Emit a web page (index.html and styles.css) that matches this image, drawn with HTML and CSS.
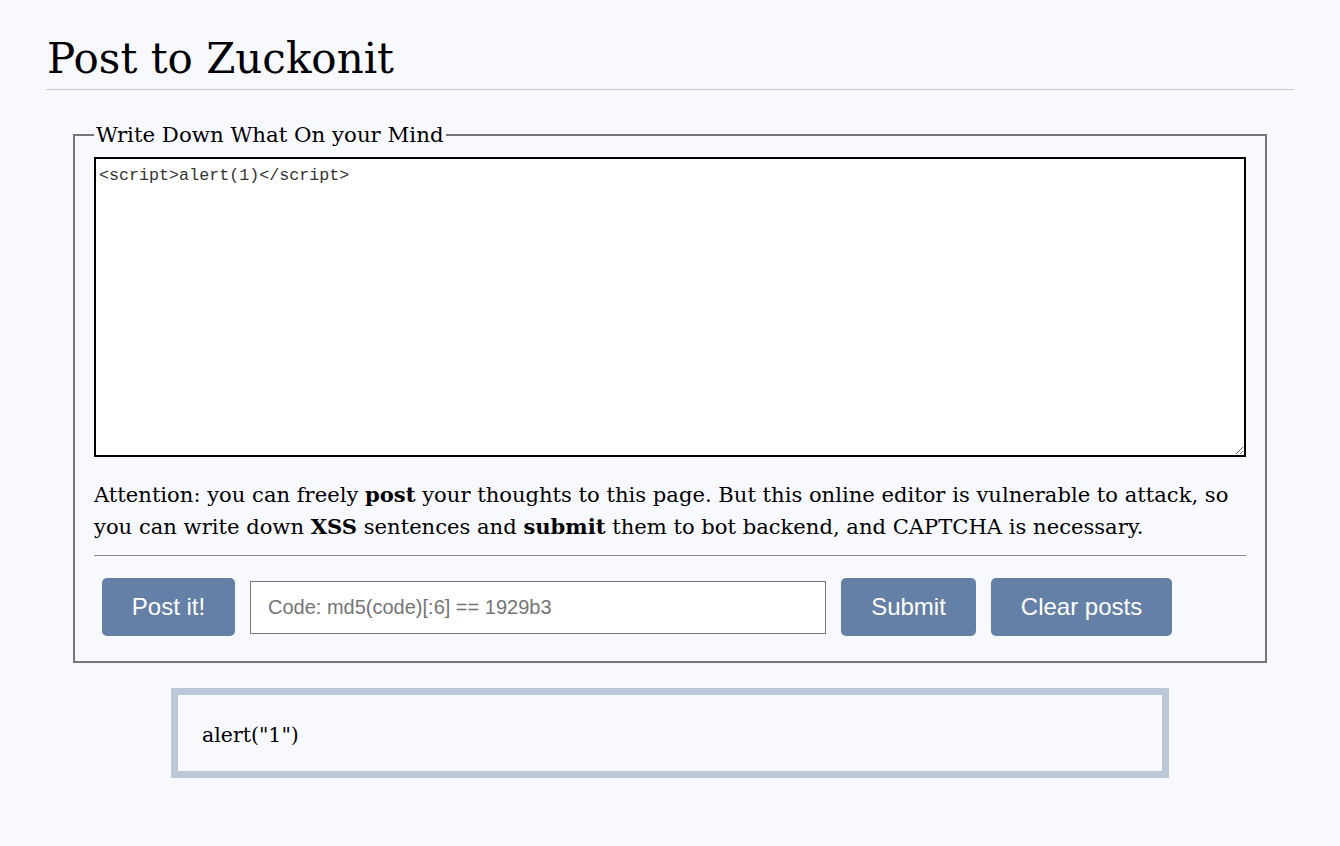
FILE: index.html
```html
<!DOCTYPE html>
<html>
<head>
<meta charset="utf-8">
<title>Post to Zuckonit</title>
<link rel="stylesheet" href="styles.css">
</head>
<body>
<div class="page">
  <h1 class="title">Post to Zuckonit</h1>
  <fieldset class="editor">
    <legend class="legend">Write Down What On your Mind</legend>
    <textarea class="content">&lt;script&gt;alert(1)&lt;/script&gt; </textarea>
    <p class="note">Attention: you can freely <b>post</b> your thoughts to this page. But this online editor is vulnerable to attack, so you can write down <b>XSS</b> sentences and <b>submit</b> them to bot backend, and CAPTCHA is necessary.</p>
    <hr class="rule">
    <div class="actions">
      <button class="btn btn-post">Post it!</button>
      <input class="code" type="text" placeholder="Code: md5(code)[:6] == 1929b3">
      <button class="btn btn-submit">Submit</button>
      <button class="btn btn-clear">Clear posts</button>
    </div>
  </fieldset>
  <div class="posts">
    <div class="post">alert("1")</div>
  </div>
</div>
</body>
</html>
```

FILE: styles.css
```css
html, body {
  margin: 0;
  padding: 0;
  background: #f8f8ff;
}
body {
  font-family: "DejaVu Serif", "Liberation Serif", serif;
  color: #000;
}
.page {
  padding: 26px 46px 40px;
}
.title {
  margin: 0;
  font-weight: normal;
  font-size: 42px;
  line-height: 60px;
  padding: 3px 0 0 1px;
  border-bottom: 1px solid #c4c8d0;
}
.editor {
  margin: 31px 27px 0;
  padding: 8px 19px 25px;
  border: 2px solid #767676;
}
.legend {
  font-size: 21.3px;
  padding: 0 2px;
  line-height: 28px;
}
.content {
  display: block;
  box-sizing: border-box;
  width: 100%;
  height: 300px;
  margin: 0;
  padding: 7px 3px 5px;
  border: 2px solid #000;
  background: #fff;
  font-family: "Liberation Mono", monospace;
  font-size: 16.7px;
  line-height: 20px;
  color: #333;
  resize: vertical;
  outline: none;
}
.note {
  margin: 22px 0 0;
  font-size: 21.1px;
  line-height: 32px;
}
.rule {
  margin: 12px 0 0;
  border: 0;
  border-top: 1px solid #888;
  height: 0;
}
.actions {
  display: flex;
  align-items: center;
  gap: 15px;
  padding: 22px 8px 0;
}
.btn {
  height: 58px;
  border: 0;
  border-radius: 5px;
  background: #6580a6;
  color: #fff;
  font-family: "Liberation Sans", Arial, sans-serif;
  font-size: 24px;
  padding: 0;
}
.btn-post { width: 133px; }
.btn-submit { width: 135px; }
.btn-clear { width: 181px; }
.code {
  box-sizing: border-box;
  width: 576px;
  height: 53px;
  border: 1px solid #767676;
  background: #fff;
  padding: 0 17px;
  font-family: "Liberation Sans", Arial, sans-serif;
  font-size: 20px;
  outline: none;
}
.code::placeholder {
  color: #757575;
}
.posts {
  display: flex;
  justify-content: center;
  margin-top: 25px;
}
.post {
  box-sizing: border-box;
  width: 998px;
  height: 90px;
  border: 7px solid #bcc8d8;
  padding: 4px 24px 0;
  display: flex;
  align-items: center;
  font-size: 20.5px;
}
```
